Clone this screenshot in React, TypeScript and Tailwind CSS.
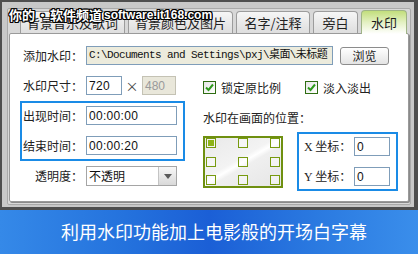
import React from "react";

const cjk = "font-['Noto_Sans_CJK_SC','Noto_Sans',sans-serif]";
const latin = "font-['Liberation_Sans','Noto_Sans_CJK_SC',sans-serif]";

const tabs = [
  { label: "背景音乐及歌词", w: "w-[105px]" },
  { label: "背景颜色及图片", w: "w-[105px]" },
  { label: "名字/注释", w: "w-[74px]" },
  { label: "旁白", w: "w-[45px]" },
  { label: "水印", w: "w-[46px]", active: true },
];

const Field = ({ value, className = "" }: { value: string; className?: string }) => (
  <div
    className={`h-[19px] border border-[#7f9db9] bg-white px-[2px] flex items-center text-[12px] text-[#111] tracking-[0.3px] ${latin} ${className}`}
  >
    {value}
  </div>
);

const Check = ({ label, className = "" }: { label: string; className?: string }) => (
  <div className={`flex items-center ${className}`}>
    <div className="w-[13px] h-[13px] border border-[#2f6d12] bg-[linear-gradient(135deg,#e6e6e6,#ffffff)] flex items-center justify-center">
      <svg width="11" height="11" viewBox="0 0 11 11">
        <path d="M2 5.5 L4.5 8 L9 2.5" fill="none" stroke="#2e9a1c" strokeWidth="2" />
      </svg>
    </div>
    <span className="ml-[5px] text-[12px] text-[#222]">{label}</span>
  </div>
);

const Spot = ({ on }: { on?: boolean }) => (
  <div className="w-[10px] h-[10px] border-[1.5px] border-[#779a0e] bg-white/40 flex items-center justify-center">
    {on && <div className="w-[6px] h-[6px] bg-[#8db318]" />}
  </div>
);

export default function App() {
  return (
    <div className={`w-[418px] h-[254px] overflow-hidden relative ${cjk}`}>
      {/* window frame */}
      <div className="h-[210px] border-l-2 border-t-2 border-r-[4px] border-b-[3px] border-[#4e4e4e] bg-[#c8c8c8] pl-[5px] pr-[3px] pt-[6px] pb-[2px]">
        <div className="h-[197px] border border-[#a9a9a9] rounded-[2px] bg-[#d8d8d8] pt-[1px] pr-[1px]">
          {/* tabs */}
          <div className="h-[23px] flex items-start pl-[12px] gap-[3px]">
            {tabs.map((t) =>
              t.active ? (
                <div
                  key={t.label}
                  className={`${t.w} h-[24px] relative z-10 rounded-t-[4px] border border-b-0 border-[#9fb486] bg-[linear-gradient(180deg,#c2de7c_0%,#e4f1c3_50%,#ffffff_100%)] flex items-center justify-center text-[13px] text-[#1a1a1a]`}
                >
                  {t.label}
                </div>
              ) : (
                <div
                  key={t.label}
                  className={`${t.w} h-[22px] mt-[1px] rounded-t-[4px] border border-b-0 border-[#9c9c9c] bg-[linear-gradient(180deg,#f6f6f6,#dedede)] flex items-center justify-center text-[13px] text-[#222] pt-[1px]`}
                >
                  {t.label}
                </div>
              )
            )}
          </div>

          {/* panel */}
          <div className="ml-[1px] w-[400px] h-[169px] border border-[#9a9a9a] bg-white rounded-[2px] shadow-[1px_1px_0_#8a8a8a] pt-[12px]">
            <div className="flex items-center h-[19px]">
              <div className="w-[73px] text-right text-[12px] text-[#222]">添加水印：</div>
              <div className="ml-[3px] w-[247px] h-[19px] border border-[#7f9db9] bg-[#ecebdc] overflow-hidden whitespace-nowrap px-[2px] flex items-center text-[11px] tracking-[-0.6px] text-[#111] font-['Liberation_Mono','Noto_Sans_CJK_SC',monospace]">
                C:\Documents and Settings\pxj\桌面\未标题
              </div>
              <div className="ml-[7px] w-[49px] h-[18px] border border-[#8c8c8c] rounded-[3px] bg-[linear-gradient(180deg,#ffffff,#e4e4e4)] flex items-center justify-center text-[12px] text-[#222]">
                浏览
              </div>
            </div>

            <div className="flex items-center h-[19px] mt-[11px]">
              <div className="w-[73px] text-right text-[12px] text-[#222]">水印尺寸：</div>
              <Field value="720" className="ml-[3px] w-[36px]" />
              <span className="w-[20px] text-center text-[13px] text-[#444]">×</span>
              <div className={`w-[34px] h-[19px] border border-[#c4c2b4] bg-[#e9e7da] px-[2px] flex items-center text-[12px] text-[#9a9a9a] ${latin}`}>
                480
              </div>
              <Check label="锁定原比例" className="ml-[27px] mt-[4px]" />
              <Check label="淡入淡出" className="ml-[24px] mt-[4px]" />
            </div>

            <div className="flex mt-[6px]">
              <div>
                <div className="ml-[10px] w-[165px] h-[60px] border-2 border-[#1a8be6] pt-[3px]">
                  <div className="flex items-center h-[19px]">
                    <div className="w-[61px] text-right text-[12px] text-[#222]">出现时间：</div>
                    <Field value="00:00:00" className="ml-[3px] w-[91px]" />
                  </div>
                  <div className="flex items-center h-[19px] mt-[11px]">
                    <div className="w-[61px] text-right text-[12px] text-[#222]">结束时间：</div>
                    <Field value="00:00:20" className="ml-[3px] w-[91px]" />
                  </div>
                </div>
                <div className="flex items-center h-[20px] mt-[5px]">
                  <div className="w-[73px] text-right text-[12px] text-[#222]">透明度：</div>
                  <div className="ml-[3px] w-[91px] h-[20px] border border-[#a5a5a5] bg-white flex">
                    <div className="flex-1 flex items-center pl-[2px] text-[12px] text-[#111]">不透明</div>
                    <div className="w-[18px] border-l border-[#c4c4c4] bg-[linear-gradient(180deg,#f7f7f7,#d9d9d9)] flex items-center justify-center">
                      <svg width="8" height="5" viewBox="0 0 8 5">
                        <path d="M0 0 H8 L4 5 Z" fill="#5a5a5a" />
                      </svg>
                    </div>
                  </div>
                </div>
              </div>

              <div className="ml-[18px]">
                <div className="mt-[9px] h-[16px] leading-[16px] text-[12px] text-[#222]">水印在画面的位置：</div>
                <div className="flex items-start mt-[6px]">
                  <div className="mt-[4px] w-[80px] h-[52px] border-2 border-[#6f9010] bg-[linear-gradient(150deg,#e9e9e9_0%,#f3f3f3_44%,#ffffff_50%,#efefef_56%,#e6e6e6_100%)] px-[1px] flex flex-col justify-between pb-[1px]">
                    <div className="flex justify-between"><Spot on /><Spot /><Spot /></div>
                    <div className="flex justify-between"><Spot /><Spot /><Spot /></div>
                    <div className="flex justify-between"><Spot /><Spot /><Spot /></div>
                  </div>
                  <div className="ml-[14px] w-[101px] h-[59px] border-2 border-[#1a8be6] pt-[1px] pl-[5px]">
                    <div className="flex items-center h-[19px] mt-[2px]">
                      <div className="w-[48px] whitespace-nowrap text-[12px] text-[#222]">
                        <span className="font-['Liberation_Serif',serif]">X</span> 坐标：
                      </div>
                      <Field value="0" className="ml-[2px] w-[36px]" />
                    </div>
                    <div className="flex items-center h-[19px] mt-[11px]">
                      <div className="w-[48px] whitespace-nowrap text-[12px] text-[#222]">
                        <span className="font-['Liberation_Serif',serif]">Y</span> 坐标：
                      </div>
                      <Field value="0" className="ml-[2px] w-[36px]" />
                    </div>
                  </div>
                </div>
              </div>
            </div>
          </div>
        </div>
      </div>

      {/* site watermark over the tabs */}
      <div className="absolute left-[9px] top-[5px] z-20 flex items-center text-white font-bold whitespace-nowrap [text-shadow:1px_0_0_#000,-1px_0_0_#000,0_1px_0_#000,0_-1px_0_#000,1px_1px_0_#000,-1px_-1px_0_#000,1px_-1px_0_#000,-1px_1px_0_#000]">
        <span className="text-[13px]">你的</span>
        <span className="text-[13px] mx-[1px]">·</span>
        <span className="text-[13px]">软件频道</span>
        <span className={`ml-[2px] text-[12px] ${latin}`}>software.it168.com</span>
      </div>

      {/* caption band */}
      <div className="h-[44px] bg-[linear-gradient(90deg,#3589e8_0%,#2472dd_30%,#1b5fd6_50%,#2a79e0_75%,#3a8eeb_100%)] flex items-center justify-center pl-[10px] pb-[2px] text-white text-[18px]">
        利用水印功能加上电影般的开场白字幕
      </div>
    </div>
  );
}
